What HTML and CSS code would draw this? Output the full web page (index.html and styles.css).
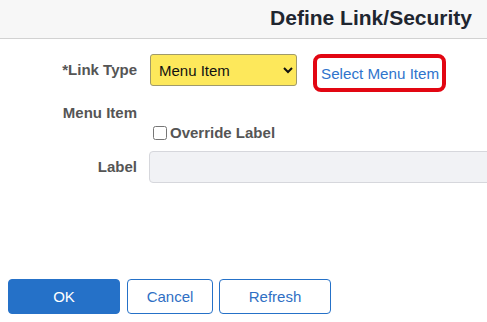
FILE: index.html
```html
<!DOCTYPE html>
<html lang="en">
<head>
    <meta charset="UTF-8">
    <meta name="viewport" content="width=device-width, initial-scale=1.0">
    <title>Define Link/Security</title>
    <link rel="stylesheet" href="styles.css">
</head>
<body>
    <header class="page-header">
        <h1>Define Link/Security</h1>
    </header>

    <div class="form">
        <div class="row row-type">
            <label class="field-label" for="link-type">*Link Type</label>
            <select id="link-type" class="link-type">
                <option>Menu Item</option>
            </select>
            <a href="#" class="select-link">Select Menu Item</a>
        </div>

        <div class="row row-text">
            <span class="field-label">Menu Item</span>
        </div>

        <div class="row row-check">
            <input type="checkbox" id="override-label">
            <label for="override-label" class="check-label">Override Label</label>
        </div>

        <div class="row row-input">
            <label class="field-label" for="label-input">Label</label>
            <input type="text" id="label-input" class="label-input" disabled>
        </div>
    </div>

    <div class="actions">
        <button class="btn btn-primary">OK</button>
        <button class="btn btn-cancel">Cancel</button>
        <button class="btn btn-refresh">Refresh</button>
    </div>
</body>
</html>
```

FILE: styles.css
```css
html, body {
    margin: 0;
    height: 100%;
}
body {
    font-family: "Liberation Sans", Arial, sans-serif;
    font-size: 15px;
    background-color: white;
    display: flex;
    flex-direction: column;
    overflow: hidden;
}
.page-header {
    height: 39px;
    background-color: #f7f7f7;
    border-bottom: 1px solid #d2d2d2;
    display: flex;
    align-items: center;
    justify-content: flex-end;
    padding: 0 15px 2px 0;
    box-sizing: border-box;
    flex-shrink: 0;
}
.page-header h1 {
    margin: 0;
    font-size: 21px;
    font-weight: bold;
    color: #1f2630;
}
.form {
    padding-top: 15px;
    overflow: hidden;
}
.row {
    display: flex;
    align-items: flex-start;
}
.field-label {
    width: 137px;
    flex-shrink: 0;
    text-align: right;
    font-weight: bold;
    color: #555555;
    margin-right: 12px;
}
.row-type {
    height: 38px;
}
.row-type .field-label {
    line-height: 32px;
}
.link-type {
    width: 147px;
    height: 32px;
    margin: 0 0 0 1px;
    padding: 0 4px;
    font-family: inherit;
    font-size: 15px;
    color: #111;
    background-color: #fde85b;
    border: 1px solid #a09a6a;
    border-radius: 3px;
}
.select-link {
    margin-left: 16px;
    height: 38px;
    box-sizing: border-box;
    border: 4px solid #e20612;
    border-radius: 8px;
    padding: 0 3px 0 4px;
    display: flex;
    align-items: center;
    color: #2f74cc;
    text-decoration: none;
    font-size: 15.2px;
}
.row-text {
    margin-top: 12px;
    line-height: 18px;
}
.row-check {
    margin-top: 2px;
    padding-left: 149px;
    line-height: 18px;
    align-items: center;
}
.row-check input {
    width: 14px;
    height: 14px;
    margin: 0 3px 0 4px;
}
.check-label {
    font-weight: bold;
    color: #555555;
}
.row-input {
    margin-top: 9px;
}
.row-input .field-label {
    line-height: 32px;
}
.label-input {
    flex: 1;
    min-width: 0;
    height: 32px;
    margin-right: -8px;
    box-sizing: border-box;
    background-color: #f1f2f5;
    border: 1px solid #d6d7dc;
    border-radius: 4px;
}
.actions {
    margin-top: auto;
    padding: 0 8px 8px 8px;
    display: flex;
    gap: 7px;
}
.btn {
    height: 35px;
    font-family: inherit;
    font-size: 15px;
    border-radius: 4px;
    border: 1px solid #2571c8;
    background-color: white;
    color: #2f6fc4;
    cursor: pointer;
}
.btn-primary {
    width: 112px;
    background-color: #2571c8;
    color: white;
}
.btn-cancel {
    width: 86px;
}
.btn-refresh {
    width: 112px;
    margin-left: -1px;
}
```
